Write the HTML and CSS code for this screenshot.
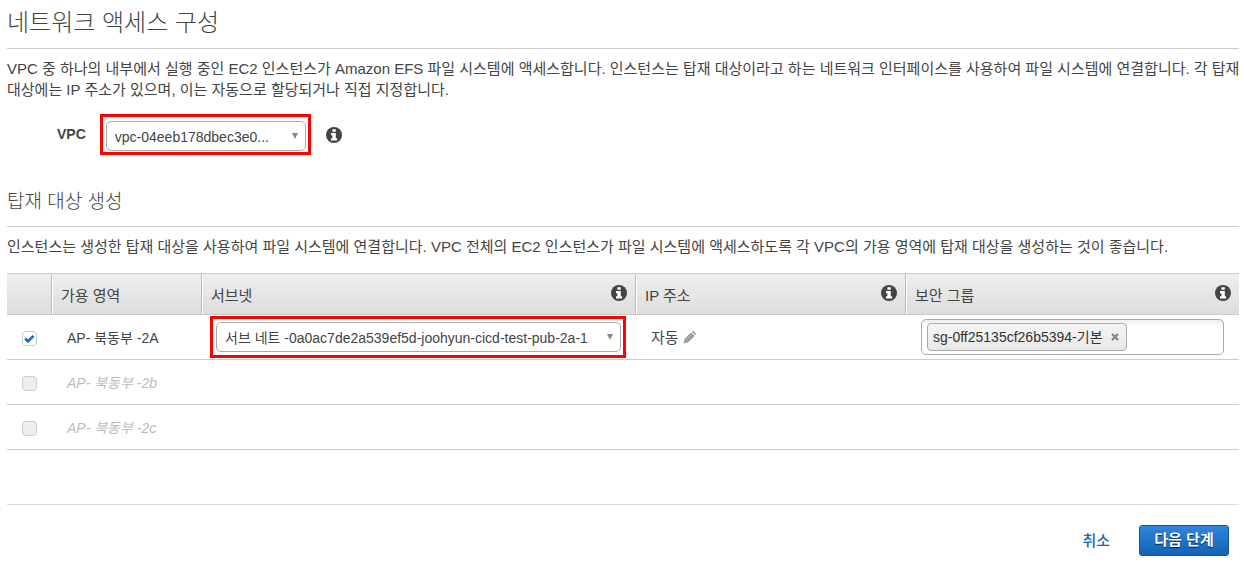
FILE: index.html
```html
<!DOCTYPE html>
<html lang="ko">
<head>
  <meta charset="UTF-8">
  <meta name="viewport" content="width=device-width, initial-scale=1.0">
  <title>네트워크 액세스 구성</title>
  <link rel="stylesheet" href="styles.css">
</head>
<body>

  <svg class="sprite" aria-hidden="true">
    <symbol id="info" viewBox="0 0 16 16">
      <circle cx="8" cy="8" r="8" fill="#444"/>
      <path d="M6.4 2.2h3.4v2.6H6.4zM5 5.9h4.8v5.3h1.3v2.3H5v-2.3h1.4v-3H5z" fill="#fff"/>
    </symbol>
    <symbol id="pencil" viewBox="0 0 13 13">
      <path d="M0.5 12.5l1-4.4 6.6-6.6 3.4 3.4-6.6 6.6zM8.9 0.9l0.7-0.6q0.6-0.4 1.1 0l2 2q0.4 0.6 0 1.1l-0.6 0.7z" fill="#999"/>
      <path d="M1.5 10.1l1.5 1.5M3.4 8.8l5-5" stroke="#ddd" stroke-width="0.6" fill="none"/>
    </symbol>
  </svg>

  <div class="container">
    <h1>네트워크 액세스 구성</h1>
    <p>VPC 중 하나의 내부에서 실행 중인 EC2 인스턴스가 Amazon EFS 파일 시스템에 액세스합니다. 인스턴스는 탑재 대상이라고 하는 네트워크 인터페이스를 사용하여 파일 시스템에 연결합니다. 각 탑재 대상에는 IP 주소가 있으며, 이는 자동으로 할당되거나 직접 지정합니다.</p>

    <div class="vpc-row">
      <label for="vpc">VPC</label>
      <div class="highlight">
        <select id="vpc">
          <option>vpc-04eeb178dbec3e0...</option>
        </select>
      </div>
      <button type="button" class="info" aria-label="VPC 정보"><svg><use href="#info"/></svg></button>
    </div>

    <h2>탑재 대상 생성</h2>
    <p>인스턴스는 생성한 탑재 대상을 사용하여 파일 시스템에 연결합니다. VPC 전체의 EC2 인스턴스가 파일 시스템에 액세스하도록 각 VPC의 가용 영역에 탑재 대상을 생성하는 것이 좋습니다.</p>

    <table>
      <colgroup>
        <col class="col-check">
        <col class="col-zone">
        <col class="col-subnet">
        <col class="col-ip">
        <col class="col-group">
      </colgroup>
      <thead>
        <tr>
          <th></th>
          <th>가용 영역</th>
          <th><div class="head">서브넷 <button type="button" class="info" aria-label="서브넷 정보"><svg><use href="#info"/></svg></button></div></th>
          <th><div class="head">IP 주소 <button type="button" class="info" aria-label="IP 주소 정보"><svg><use href="#info"/></svg></button></div></th>
          <th><div class="head">보안 그룹 <button type="button" class="info" aria-label="보안 그룹 정보"><svg><use href="#info"/></svg></button></div></th>
        </tr>
      </thead>
      <tbody>
        <tr>
          <td class="check"><input type="checkbox" id="zone-a" checked></td>
          <td class="zone"><label for="zone-a">AP- 북동부 -2A</label></td>
          <td class="subnet">
            <div class="highlight">
              <select aria-label="서브넷">
                <option>서브 네트 -0a0ac7de2a539ef5d-joohyun-cicd-test-pub-2a-1</option>
              </select>
            </div>
          </td>
          <td class="ip">
            <div class="ip-value">자동 <button type="button" class="edit" aria-label="IP 주소 편집"><svg><use href="#pencil"/></svg></button></div>
          </td>
          <td class="group">
            <div class="tags">
              <span class="tag">sg-0ff25135cf26b5394-기본
                <button type="button" aria-label="삭제"><svg viewBox="0 0 8 8"><path d="M1 1l6 6M7 1l-6 6" stroke="#888" stroke-width="2.4"/></svg></button>
              </span>
              <input type="text" aria-label="보안 그룹">
            </div>
          </td>
        </tr>
        <tr class="disabled">
          <td class="check"><input type="checkbox" id="zone-b" disabled></td>
          <td class="zone"><label for="zone-b">AP- 북동부 -2b</label></td>
          <td></td>
          <td></td>
          <td></td>
        </tr>
        <tr class="disabled">
          <td class="check"><input type="checkbox" id="zone-c" disabled></td>
          <td class="zone"><label for="zone-c">AP- 북동부 -2c</label></td>
          <td></td>
          <td></td>
          <td></td>
        </tr>
      </tbody>
    </table>

    <div class="actions">
      <a href="#">취소</a>
      <button type="button" class="next">다음 단계</button>
    </div>
  </div>

</body>
</html>
```
FILE: styles.css
```css
* {
  box-sizing: border-box;
}

body {
  font-family: "Liberation Sans", "Noto Sans CJK KR", sans-serif;
  font-size: 15px;
  line-height: 21px;
  color: #444;
  background-color: #fff;
  margin: 0;
}

.sprite {
  display: none;
}

.container {
  padding: 0 5px 0 7px;
}

h1, h2 {
  margin: 0 0 9px;
  font-weight: 300;
  border-bottom: 1px solid #ccc;
}

h1 {
  font-size: 24px;
  line-height: 32px;
  padding: 7px 0 9px;
}

h2 {
  font-size: 19px;
  line-height: 26px;
  padding-bottom: 11px;
}

p {
  margin: 0 -4px 0 0;
  word-break: keep-all;
}

button {
  font-family: inherit;
  cursor: pointer;
}

.info, .edit, .tag button {
  display: flex;
  padding: 0;
  border: none;
  background: none;
}

.info svg {
  width: 16px;
  height: 16px;
}

.vpc-row {
  display: flex;
  align-items: center;
  margin: 14px 0 34px;
  padding-left: 50px;
}

.vpc-row label {
  font-size: 14px;
  font-weight: bold;
  margin-right: 14px;
}

.vpc-row .highlight {
  width: 211px;
  padding: 4px 2px 1px 3px;
  margin-right: 15px;
}

.highlight {
  padding: 3px 2px 3px 3px;
  border: 3px solid #f00;
}

select {
  display: block;
  width: 100%;
  height: 30px;
  padding: 2px 24px 0 8px;
  font-family: inherit;
  font-size: 14px;
  color: #444;
  border: 1px solid #aaa;
  border-radius: 5px;
  appearance: none;
  background: #fff url("data:image/svg+xml,%3Csvg xmlns='http://www.w3.org/2000/svg' width='6' height='6'%3E%3Cpath d='M0 0h6l-3 6z' fill='%23888'/%3E%3C/svg%3E") no-repeat right 7px center;
}

table {
  width: 100%;
  margin-top: 16px;
  table-layout: fixed;
  border-collapse: separate;
  border-spacing: 0;
  border-top: 1px solid #ccc;
}

.col-check {
  width: 45px;
}

.col-zone {
  width: 150px;
}

.col-subnet {
  width: 434px;
}

.col-ip {
  width: 270px;
}

th {
  height: 41px;
  padding: 2px 8px 0 9px;
  font-weight: normal;
  text-align: left;
  border-right: 1px solid #bbb;
  border-bottom: 1px solid #ccc;
  box-shadow: inset 1px 0 #fff;
  background: linear-gradient(#eee, #ddd);
}

th:first-child {
  box-shadow: none;
}

th:last-child {
  border-right: none;
}

.head {
  display: flex;
  justify-content: space-between;
}

td {
  height: 45px;
  padding: 0;
  border-bottom: 1px solid #ccc;
}

.check input {
  display: block;
  width: 15px;
  height: 15px;
  margin: 2px auto 0;
  appearance: none;
  border: 1px solid #ccc;
  border-radius: 4px;
  background-color: #fff;
}

.check input:checked {
  background: #fff url("data:image/svg+xml,%3Csvg xmlns='http://www.w3.org/2000/svg' width='11' height='9'%3E%3Cpath d='M1.2 4.5l2.8 2.8 5.6-5.4' stroke='%231a66c0' stroke-width='2.6' fill='none'/%3E%3C/svg%3E") no-repeat center;
}

.check input:disabled {
  background-color: #eee;
}

.zone {
  padding: 2px 0 0 15px;
  font-size: 14px;
}

.disabled {
  color: #bbb;
  font-style: italic;
}

.subnet {
  padding: 0 10px 0 8px;
}

.ip {
  padding-left: 15px;
}

.ip-value {
  display: flex;
  align-items: center;
  gap: 4px;
}

.edit svg {
  width: 13px;
  height: 13px;
}

.group {
  padding: 0 15px;
}

.tags {
  display: flex;
  align-items: center;
  height: 36px;
  padding: 0 5px;
  border: 1px solid #aaa;
  border-radius: 5px;
  background: linear-gradient(#eee, #fff 6px);
}

.tags input {
  flex: 1;
  min-width: 0;
  border: none;
  outline: none;
  background: none;
}

.tag {
  display: flex;
  align-items: center;
  gap: 8px;
  height: 28px;
  padding: 0 7px 0 5px;
  font-size: 14px;
  color: #333;
  white-space: nowrap;
  border: 1px solid #aaa;
  border-radius: 4px;
  background: linear-gradient(#f4f4f4, #e8e8e8);
}

.tag svg {
  width: 8px;
  height: 8px;
}

.actions {
  display: flex;
  justify-content: flex-end;
  align-items: center;
  gap: 29px;
  margin-top: 54px;
  padding: 20px 10px 12px 0;
  border-top: 1px solid #ddd;
}

.actions a {
  color: #1a66b8;
  font-weight: 500;
  text-decoration: none;
}

.next {
  width: 90px;
  height: 31px;
  padding: 0 0 2px;
  font-size: 15px;
  line-height: 21px;
  font-weight: bold;
  color: #fff;
  text-shadow: 0 1px 1px #023;
  border: 1px solid #1058a8;
  border-radius: 3px;
  background: linear-gradient(#2f86dc, #1262b8);
}
```
